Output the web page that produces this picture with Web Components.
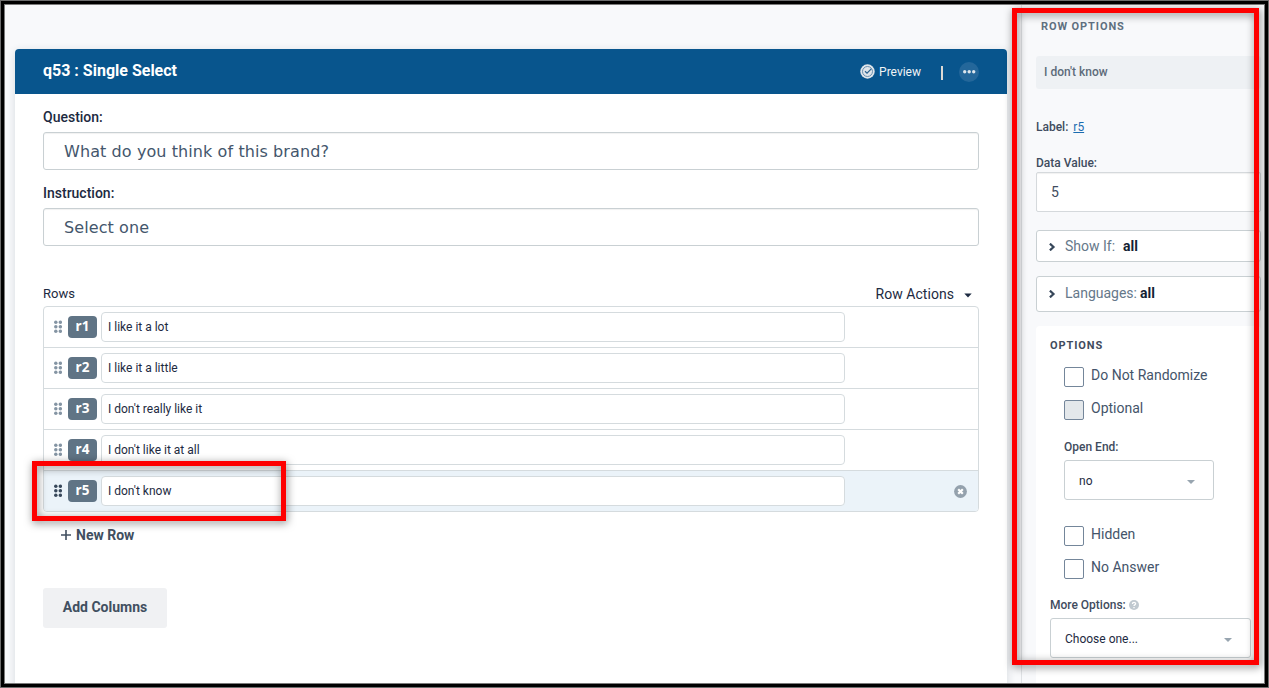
<!DOCTYPE html>
<html lang="en">
<head>
<meta charset="utf-8">
<title>Single Select</title>
<style>
  body {
    margin: 0;
    width: 1269px;
    height: 688px;
    overflow: hidden;
    font-family: Roboto, "Liberation Sans", sans-serif;
    font-size: 14px;
    color: #1d2a41;
  }
</style>
</head>
<body>
<survey-editor>
  <question-card slot="main" heading="q53 : Single Select">
    <text-field label="Question:">What do you think of this brand?</text-field>
    <text-field label="Instruction:">Select one</text-field>
    <row-list>
      <answer-row name="r1">I like it a lot</answer-row>
      <answer-row name="r2">I like it a little</answer-row>
      <answer-row name="r3">I don't really like it</answer-row>
      <answer-row name="r4">I don't like it at all</answer-row>
      <answer-row name="r5" selected>I don't know</answer-row>
    </row-list>
  </question-card>
  <row-options slot="side"></row-options>
  <mark-box slot="marks" style="left: 32px; top: 461px; width: 254px; height: 60px"></mark-box>
  <mark-box slot="marks" style="left: 1012px; top: 8px; width: 247px; height: 657px"></mark-box>
</survey-editor>

<script>
function define(name, html, setup) {
  const template = document.createElement('template')
  template.innerHTML = html

  customElements.define(name, class extends HTMLElement {
    constructor() {
      super()
      this.attachShadow({ mode: 'open' })
      this.shadowRoot.appendChild(template.content.cloneNode(true))
    }

    connectedCallback() {
      if (setup) setup(this, this.shadowRoot)
    }
  })
}

// Page frame with the editor column and the options column
define('survey-editor', `
<style>
  :host {
    display: flex;
    position: relative;
    box-sizing: border-box;
    width: 1269px;
    height: 688px;
    border: 1px solid #6d6d6d;
    background: #000;
    padding: 3px;
    overflow: hidden;
  }
  .page {
    display: flex;
    flex: 1;
    border: 1px solid #7b7b7b;
    background: #f8f9fb;
    overflow: hidden;
  }
  main {
    width: 1016px;
    box-sizing: border-box;
    padding: 44px 14px 0 10px;
    display: flex;
  }
  aside {
    flex: 1;
    border-left: 1px solid #dfe2e5;
    min-width: 0;
  }
</style>
<div class="page">
  <main><slot name="main"></slot></main>
  <aside><slot name="side"></slot></aside>
</div>
<slot name="marks"></slot>
`)

// Red outline laid over the page
define('mark-box', `
<style>
  :host {
    display: block;
    position: absolute;
    box-sizing: border-box;
    margin: -1px 0 0 -1px;
    border: 5px solid #fe0000;
    filter: drop-shadow(1px 2px 4px rgba(0, 0, 0, 0.5));
    pointer-events: none;
  }
</style>
`)

define('question-card', `
<style>
  :host {
    display: flex;
    flex-direction: column;
    width: 992px;
    height: 660px;
    background: #fff;
    border-radius: 4px 4px 0 0;
    box-shadow: 0 2px 8px rgba(40, 55, 75, 0.16);
  }
  header {
    display: flex;
    align-items: center;
    height: 45px;
    box-sizing: border-box;
    padding: 0 28px;
    background: #08558d;
    color: #fff;
    border-radius: 4px 4px 0 0;
  }
  h1 {
    flex: 1;
    margin: 0;
    font-size: 16px;
    line-height: 20px;
    font-weight: 700;
    padding-bottom: 2px;
  }
  .preview {
    display: flex;
    align-items: center;
    gap: 4px;
    font-size: 12px;
    color: #f0f3f5;
  }
  .preview svg {
    margin-top: -1px;
  }
  .bar {
    width: 2px;
    height: 14px;
    margin: 2px 16px 0 20px;
    background: #dcd9d4;
  }
  .more {
    display: block;
  }
  .body {
    padding: 13px 28px 0;
  }
  .new-row {
    display: flex;
    align-items: center;
    gap: 5px;
    height: 20px;
    margin: 13px 0 43px 18px;
    font-weight: 700;
    color: #414f60;
  }
  button {
    display: block;
    width: 124px;
    height: 40px;
    padding: 0 0 2px;
    border: 0;
    border-radius: 3px;
    background: #f0f1f3;
    color: #414f60;
    font: 700 14px Roboto, sans-serif;
  }
</style>
<header>
  <h1></h1>
  <div class="preview">
    <svg width="15" height="15" viewBox="0 0 15 15">
      <circle cx="7.5" cy="7.5" r="7.2" fill="#dfe5ea"/>
      <circle cx="7.5" cy="7.5" r="5" fill="none" stroke="#5d86a8" stroke-width="0.9"/>
      <path d="M5 7.300l2 1.900 4.300-4.400" fill="none" stroke="#2a628f" stroke-width="1.200"/>
    </svg>
    <span>Preview</span>
  </div>
  <div class="bar"></div>
  <svg class="more" width="20" height="20" viewBox="0 0 20 20">
    <circle cx="10" cy="10" r="10" fill="#24679a"/>
    <g fill="#dce5ec"><circle cx="5.7" cy="9.7" r="1.7"/><circle cx="10.2" cy="9.7" r="1.7"/><circle cx="14.7" cy="9.7" r="1.7"/></g>
  </svg>
</header>
<div class="body">
  <slot></slot>
  <div class="new-row">
    <svg width="10" height="10" viewBox="0 0 10 10"><path d="M5 0v10M0 5h10" stroke="#414f60" stroke-width="1.6"/></svg>
    <span>New Row</span>
  </div>
  <button>Add Columns</button>
</div>
`, (el, root) => {
  root.querySelector('h1').textContent = el.getAttribute('heading')
})

define('text-field', `
<style>
  :host {
    display: block;
    margin-bottom: 13px;
  }
  label {
    display: block;
    line-height: 20px;
    margin-bottom: 5px;
    font-weight: 500;
  }
  .input {
    box-sizing: border-box;
    height: 38px;
    line-height: 38px;
    padding-left: 20px;
    border: 1px solid #c9d0d3;
    border-radius: 3px;
    box-shadow: inset 0 1px 1px rgba(0, 0, 0, 0.06);
    font-family: Verdana, "DejaVu Sans", sans-serif;
    font-size: 16px;
    letter-spacing: 0.09px;
    color: #44566c;
  }
</style>
<label></label>
<div class="input"><slot></slot></div>
`, (el, root) => {
  root.querySelector('label').textContent = el.getAttribute('label')
})

define('row-list', `
<style>
  :host {
    display: block;
    padding-top: 25px;
  }
  .head {
    display: flex;
    align-items: center;
    height: 20px;
    margin-bottom: 2px;
  }
  .title {
    flex: 1;
    font-size: 13px;
    padding-bottom: 2px;
  }
  .actions {
    letter-spacing: 0.05px;
  }
  .head svg {
    margin: 2px 7px 0 10px;
  }
  .rows {
    box-sizing: border-box;
    border: 1px solid #d5dbde;
    border-radius: 4px;
    overflow: hidden;
  }
</style>
<div class="head">
  <span class="title">Rows</span>
  <span class="actions">Row Actions</span>
  <svg width="8" height="5" viewBox="0 0 8 5"><path d="M0.3 0.4h7.4L4 4.6z" fill="#1d2a41"/></svg>
</div>
<div class="rows"><slot></slot></div>
`)

define('answer-row', `
<style>
  :host {
    display: flex;
    align-items: center;
    height: 40px;
    padding-left: 10px;
    color: #8494a3;
  }
  :host(:not(:first-child)) {
    border-top: 1px solid #d5dbde;
  }
  :host([selected]) {
    background: #ebf3f9;
    color: #37475a;
  }
  .handle {
    margin: 0 0 1px -0.5px;
  }
  .badge {
    width: 29px;
    height: 22px;
    line-height: 20px;
    margin: 0 4px 0 6.5px;
    border-radius: 4px;
    background: #607485;
    color: #fff;
    text-align: center;
    font-family: "Noto Sans", "Open Sans", sans-serif;
    font-size: 13.5px;
    font-weight: 700;
  }
  .input {
    box-sizing: border-box;
    width: 744px;
    height: 30px;
    line-height: 28px;
    padding-left: 6px;
    border: 1px solid #d5dbde;
    border-radius: 4px;
    background: #fff;
    font-size: 12px;
    color: #1d2a41;
  }
  .remove {
    display: none;
    margin: 1px 0 0 109px;
  }
  :host([selected]) .remove {
    display: block;
  }
</style>
<svg class="handle" width="8" height="13" viewBox="0 0 8 13" fill="currentColor">
  <circle cx="1.8" cy="2.3" r="1.75"/><circle cx="6.3" cy="2.3" r="1.75"/>
  <circle cx="1.8" cy="6.8" r="1.75"/><circle cx="6.3" cy="6.8" r="1.75"/>
  <circle cx="1.8" cy="11.2" r="1.75"/><circle cx="6.3" cy="11.2" r="1.75"/>
</svg>
<span class="badge"></span>
<div class="input"><slot></slot></div>
<svg class="remove" width="13" height="13" viewBox="0 0 13 13">
  <circle cx="6.5" cy="6.5" r="6.4" fill="#94a1ad"/>
  <path d="M4.2 4.2l4.6 4.6M8.8 4.2l-4.6 4.6" stroke="#fff" stroke-width="2.2"/>
</svg>
`, (el, root) => {
  root.querySelector('.badge').textContent = el.getAttribute('name')
})

define('row-options', `
<style>
  :host {
    display: block;
    padding: 12px 0 0 14px;
    width: 225px;
    color: #3f4c5e;
    font-size: 12px;
  }
  h2 {
    margin: 0;
    padding-left: 5px;
    font-size: 11px;
    line-height: 20px;
    letter-spacing: 0.9px;
    color: #5f7080;
  }
  .name {
    height: 33px;
    line-height: 32px;
    margin: 19px 0 28px;
    padding-left: 8px;
    border-radius: 3px;
    background: #eef1f4;
    color: #5d6b7a;
    font-weight: 500;
  }
  .label {
    line-height: 20px;
    font-weight: 500;
  }
  .label a {
    margin-left: 2px;
    font-weight: 400;
    color: #1b6cb0;
    text-decoration: underline;
  }
  .value {
    box-sizing: border-box;
    height: 40px;
    line-height: 38px;
    margin-bottom: 18px;
    padding-left: 14px;
    border: 1px solid #d5d9dc;
    border-radius: 2px;
    box-shadow: inset 0 1px 1px rgba(0, 0, 0, 0.06);
    background: #fff;
    font-size: 14px;
  }
  .panel {
    height: 358px;
    padding: 10px 0 0 14px;
    border-radius: 4px;
    background: #fff;
  }
  .panel h2 {
    padding: 0;
    color: #3f4c5e;
  }
  .group {
    padding: 9px 0 0 14px;
  }
  .more {
    display: flex;
    align-items: center;
    gap: 3px;
  }
</style>
<h2>ROW OPTIONS</h2>
<div class="name">I don't know</div>
<div class="label">Label: <a>r5</a></div>
<div class="label" style="margin-top: 16px; height: 19px">Data Value:</div>
<div class="value">5</div>
<fold-row label="Show If:" style="height: 32px; margin-bottom: 14px; --gap: 8px">all</fold-row>
<fold-row label="Languages:" style="height: 36px; margin-bottom: 14px; padding-bottom: 2px; --gap: 3px">all</fold-row>
<div class="panel">
  <h2>OPTIONS</h2>
  <div class="group">
    <check-option>Do Not Randomize</check-option>
    <check-option disabled>Optional</check-option>
    <div class="label" style="margin: 6px 0 3px">Open End:</div>
    <select-box style="width: 150px; margin-bottom: 24px">no</select-box>
    <check-option>Hidden</check-option>
    <check-option>No Answer</check-option>
  </div>
  <div class="label more" style="margin: 5px 0 3px">
    <span>More Options:</span>
    <svg width="10" height="10" viewBox="0 0 10 10">
      <circle cx="5" cy="5" r="5" fill="#c0c9d0"/>
      <path d="M3.4 3.9c0-2 3.2-2 3.2-.1C6.600 4.900 5 4.900 5 6M5 7v1.300" fill="none" stroke="#fff" stroke-width="1.300"/>
    </svg>
  </div>
  <select-box style="width: 201px">Choose one...</select-box>
</div>
`)

define('fold-row', `
<style>
  :host {
    display: flex;
    align-items: center;
    box-sizing: border-box;
    padding-left: 12px;
    border: 1px solid #c9d0d3;
    border-radius: 3px;
    background: #fff;
    font-size: 14px;
    color: #65788a;
  }
  svg {
    margin: 1px 9px 0 0;
  }
  b {
    margin-left: var(--gap);
    font-weight: 700;
    color: #141f33;
  }
</style>
<svg width="7" height="8" viewBox="0 0 7 8"><path d="M0.900 0.600l3.600 3.400-3.600 3.400" fill="none" stroke="#37475a" stroke-width="2.200"/></svg>
<span></span><b><slot></slot></b>
`, (el, root) => {
  root.querySelector('span').textContent = el.getAttribute('label')
})

define('check-option', `
<style>
  :host {
    display: flex;
    gap: 7px;
    height: 33px;
    font-size: 14px;
    line-height: 20px;
    color: #44546a;
  }
  .box {
    box-sizing: border-box;
    width: 20px;
    height: 20px;
    margin-top: 2px;
    border: 1px solid #74869a;
    border-radius: 2px;
    background: #fff;
  }
  :host([disabled]) .box {
    background: #e4e8eb;
  }
</style>
<span class="box"></span>
<span><slot></slot></span>
`)

define('select-box', `
<style>
  :host {
    display: flex;
    align-items: center;
    justify-content: space-between;
    box-sizing: border-box;
    height: 40px;
    padding: 0 18px 0 14px;
    border: 1px solid #c9d0d3;
    border-radius: 3px;
    background: #fff;
    font-size: 12px;
    color: #1d2a41;
  }
  span {
    padding-top: 2px;
  }
  svg {
    margin-top: 3px;
  }
</style>
<span><slot></slot></span>
<svg width="8" height="4" viewBox="0 0 8 4"><path d="M0 0h8L4 4z" fill="#98a5b0"/></svg>
`)
</script>
</body>
</html>
